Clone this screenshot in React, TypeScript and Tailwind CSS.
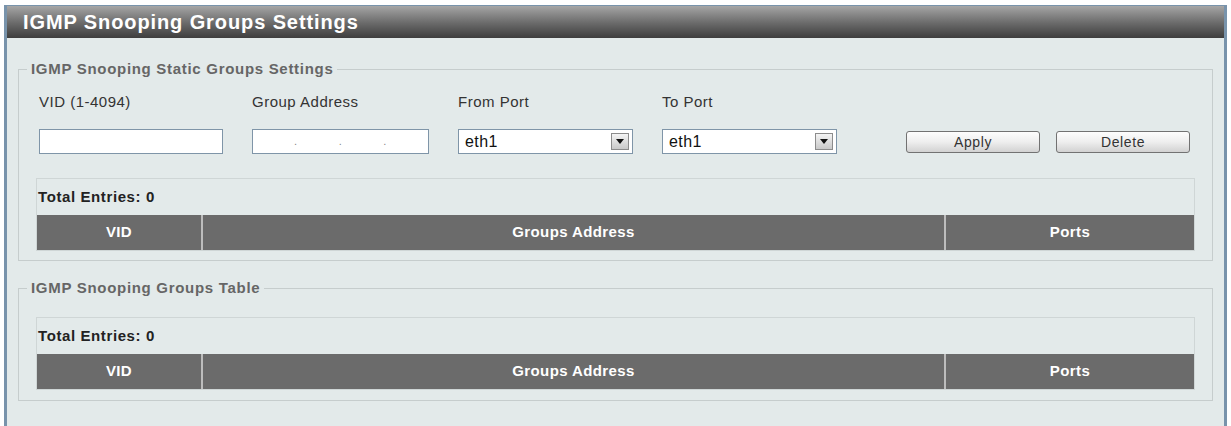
import React from 'react';

const cols = 'grid grid-cols-[164px_1fr_250px]';

function EntriesTable() {
  return (
    <div className="mx-[17px] border border-[#cfd6d6]">
      <div className="h-[36px] flex items-center pl-[1px] text-[15px] font-bold tracking-[0.6px] text-[#222]">
        Total Entries: 0
      </div>
      <div className={`${cols} h-[35px] bg-[#6b6b6b] text-white text-[15px] font-bold tracking-[0.4px]`}>
        <div className="flex items-center justify-center">VID</div>
        <div className="flex items-center justify-center border-l-2 border-[#bdbdbd]">Groups Address</div>
        <div className="flex items-center justify-center border-l-2 border-[#bdbdbd]">Ports</div>
      </div>
    </div>
  );
}

function PortSelect() {
  return (
    <div className="relative w-[175px] h-[25px]">
      <select className="appearance-none w-full h-full bg-white border border-[#7f95a8] pl-[6px] text-[16px] tracking-[0.4px] text-[#111] outline-none">
        <option>eth1</option>
      </select>
      <div className="absolute right-[4px] top-[4px] w-[18px] h-[17px] border border-[#8c8c8c] bg-gradient-to-b from-[#f4f4f4] to-[#c9c9c9] flex items-center justify-center pointer-events-none">
        <svg width="8" height="5" viewBox="0 0 8 5">
          <path d="M0 0h8L4 5z" fill="#111" />
        </svg>
      </div>
    </div>
  );
}

function Button({ label }: { label: string }) {
  return (
    <button className="h-[22px] w-[134px] rounded-[3px] border border-[#727272] bg-gradient-to-b from-[#fdfdfd] via-[#eeeeee] to-[#d2d2d2] text-[14px] tracking-[0.6px] text-[#333] leading-none">
      {label}
    </button>
  );
}

export default function App() {
  return (
    <div className="w-[1231px] h-[426px] overflow-hidden bg-white pt-[5px] px-[4px] font-['Liberation_Sans',Arial,sans-serif]">
      <div className="h-full border-x-[3px] border-t border-[#7893ab] bg-[#e3eaea]">
        <div className="h-[32px] flex items-center pl-[16px] bg-gradient-to-b from-[#a6a6a6] via-[#6e6e6e] to-[#3e3e3e] text-white text-[20px] font-bold tracking-[0.9px]">
          IGMP Snooping Groups Settings
        </div>

        <fieldset className="mt-[22px] mx-[11px] border border-[#c6cdcd] pb-[9px]">
          <legend className="ml-[8px] px-[4px] text-[15px] leading-[18px] font-bold tracking-[0.7px] text-[#666]">
            IGMP Snooping Static Groups Settings
          </legend>
          <div className="pt-[15px] pl-[20px] text-[15px] tracking-[0.5px] text-[#333]">
            <div className="grid grid-cols-[213px_206px_204px_1fr] leading-[18px]">
              <div>VID (1-4094)</div>
              <div>Group Address</div>
              <div>From Port</div>
              <div>To Port</div>
            </div>
            <div className="grid grid-cols-[213px_206px_204px_1fr] mt-[18px] items-center">
              <input className="w-[184px] h-[25px] bg-white border border-[#7f95a8] outline-none" />
              <div className="w-[177px] h-[25px] bg-white border border-[#7f95a8] flex items-center text-[11px] text-[#888]">
                <input className="w-0 flex-1 h-full outline-none" />
                <span>.</span>
                <input className="w-0 flex-1 h-full outline-none" />
                <span>.</span>
                <input className="w-0 flex-1 h-full outline-none" />
                <span>.</span>
                <input className="w-0 flex-1 h-full outline-none" />
              </div>
              <PortSelect />
              <div className="flex items-center">
                <PortSelect />
                <div className="ml-[69px] flex gap-[16px]">
                  <Button label="Apply" />
                  <Button label="Delete" />
                </div>
              </div>
            </div>
          </div>
          <div className="mt-[24px]">
            <EntriesTable />
          </div>
        </fieldset>

        <fieldset className="mt-[18px] mx-[11px] border border-[#c6cdcd] pb-[10px]">
          <legend className="ml-[8px] px-[4px] text-[15px] leading-[18px] font-bold tracking-[0.7px] text-[#666]">
            IGMP Snooping Groups Table
          </legend>
          <div className="pt-[20px]">
            <EntriesTable />
          </div>
        </fieldset>
      </div>
    </div>
  );
}
